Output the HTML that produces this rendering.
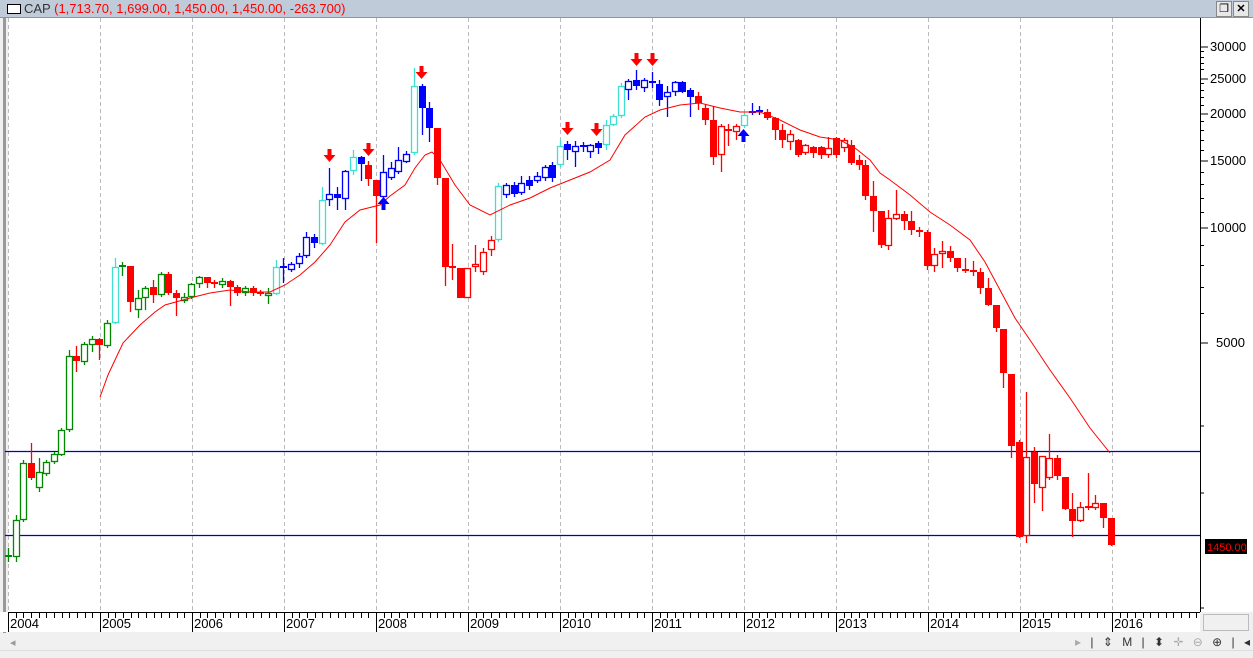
<!DOCTYPE html>
<html><head><meta charset="utf-8">
<style>
html,body{margin:0;padding:0;width:1253px;height:658px;overflow:hidden;background:#f0f0f0;font-family:"Liberation Sans",Arial,sans-serif;position:relative;}
#title{position:absolute;left:0;top:0;width:1253px;height:18px;background:#bfcbd8;border-bottom:1px solid #8a96a2;box-sizing:border-box;}
#title .t{position:absolute;left:24px;top:1px;font-size:13px;color:#333;}
#title .t span{color:#f00;}
#title .box{position:absolute;left:7px;top:4px;width:12px;height:8px;border:1px solid #000;background:#fff;}
.btn{position:absolute;top:1px;width:14px;height:14px;border:1px solid #888;background:#e8e8e8;font-size:11px;line-height:14px;text-align:center;}
#chart{position:absolute;left:0;top:18px;}
.pl{position:absolute;left:1210px;font-size:13px;color:#000;}
.yr{position:absolute;top:616px;font-size:13px;color:#000;}
#tb{position:absolute;left:1075px;top:635px;width:175px;height:15px;overflow:hidden;font-size:12px;color:#333;white-space:nowrap;letter-spacing:3px;}
</style></head><body>
<div id="title"><div class="box"></div><div class="t">CAP <span>(1,713.70, 1,699.00, 1,450.00, 1,450.00, -263.700)</span></div>
<div class="btn" style="left:1216px">&#x2750;</div><div class="btn" style="left:1233px;font-weight:bold">✕</div></div>
<svg id="chart" width="1253" height="640" viewBox="0 18 1253 640" xmlns="http://www.w3.org/2000/svg">
<rect x="8" y="18" width="1245" height="594" fill="#fff"/>
<rect x="3" y="18" width="3" height="615" fill="#999"/>
<g stroke="#bbb" stroke-dasharray="4,3" stroke-width="1">
<line x1="8.5" y1="18" x2="8.5" y2="612"/><line x1="100.5" y1="18" x2="100.5" y2="612"/><line x1="192.5" y1="18" x2="192.5" y2="612"/><line x1="284.5" y1="18" x2="284.5" y2="612"/><line x1="376.5" y1="18" x2="376.5" y2="612"/><line x1="468.5" y1="18" x2="468.5" y2="612"/><line x1="560.5" y1="18" x2="560.5" y2="612"/><line x1="652.5" y1="18" x2="652.5" y2="612"/><line x1="744.5" y1="18" x2="744.5" y2="612"/><line x1="836.5" y1="18" x2="836.5" y2="612"/><line x1="928.5" y1="18" x2="928.5" y2="612"/><line x1="1020.5" y1="18" x2="1020.5" y2="612"/><line x1="1112.5" y1="18" x2="1112.5" y2="612"/>
</g>
<line x1="5" y1="451.5" x2="1200" y2="451.5" stroke="#00c" stroke-width="1.3"/>
<line x1="5" y1="535.5" x2="1200" y2="535.5" stroke="#00c" stroke-width="1.3"/>
<g id="candles"></g>
<polyline fill="none" stroke="#f00" stroke-width="1" points="100,397 108,375 115,360 123,343 140,325 155,312 165,305 190,298 210,293 230,290 250,292 270,292 285,285 300,275 315,262 330,245 345,222 360,210 380,205 390,196 405,185 415,168 425,155 432,152 440,160 455,185 470,205 490,215 510,205 530,198 550,188 570,180 590,172 610,160 625,135 645,117 660,110 680,105 700,103 720,108 740,112 760,112 780,120 800,130 820,137 840,140 855,148 870,160 880,173 890,180 910,195 930,212 950,225 970,240 985,262 1000,290 1015,318 1030,340 1050,370 1070,398 1090,428 1110,453"/>
<g id="arrows"></g>
<line x1="1200.5" y1="18" x2="1200.5" y2="612" stroke="#000"/>
<g stroke="#000" id="yt">
<line x1="1200" y1="47" x2="1208" y2="47"/><line x1="1200" y1="79" x2="1208" y2="79"/><line x1="1200" y1="114" x2="1208" y2="114"/><line x1="1200" y1="161" x2="1208" y2="161"/><line x1="1200" y1="228" x2="1208" y2="228"/><line x1="1200" y1="343" x2="1208" y2="343"/><line x1="1200" y1="426" x2="1204" y2="426"/><line x1="1200" y1="493" x2="1204" y2="493"/><line x1="1200" y1="608" x2="1204" y2="608"/>
</g>
<rect x="0" y="612" width="1200" height="20" fill="#fff"/>
<line x1="8" y1="612.5" x2="1200" y2="612.5" stroke="#000"/>
<g id="ticks" stroke="#000"></g>
<rect x="1205" y="539" width="42" height="15" fill="#000"/>
<text x="1207" y="551" font-family="Liberation Sans" font-size="11" fill="#f00">1450.00</text>
<rect x="1201" y="612" width="52" height="21" fill="#f0f0f0"/>
<rect x="1203.5" y="614.5" width="45" height="16" fill="#f0f0f0" stroke="#bbb"/>
<rect x="0" y="633" width="1253" height="17" fill="#f0f0f0"/>
<rect x="0" y="650" width="1253" height="8" fill="#f0f0f0"/>
<line x1="0" y1="650.5" x2="1253" y2="650.5" stroke="#ddd"/>
</svg>
<div class="pl" style="top:39px">30000</div><div class="pl" style="top:71px">25000</div><div class="pl" style="top:106px">20000</div><div class="pl" style="top:153px">15000</div><div class="pl" style="top:220px">10000</div><div class="pl" style="top:335px;left:1216px">5000</div>
<div class="yr" style="left:10px">2004</div><div class="yr" style="left:102px">2005</div><div class="yr" style="left:194px">2006</div><div class="yr" style="left:286px">2007</div><div class="yr" style="left:378px">2008</div><div class="yr" style="left:470px">2009</div><div class="yr" style="left:562px">2010</div><div class="yr" style="left:654px">2011</div><div class="yr" style="left:746px">2012</div><div class="yr" style="left:838px">2013</div><div class="yr" style="left:930px">2014</div><div class="yr" style="left:1022px">2015</div><div class="yr" style="left:1114px">2016</div>
<div style="position:absolute;left:10px;top:636px;font-size:11px;color:#999">◂</div>
<div id="tb"><span style="color:#aaa">▸</span> | ⇕ M | ⬍ <span style="color:#aaa">✛ ⊖</span> ⊕ | ◀ ▶</div>
<script>
var C={g:'#008800',r:'#ff0000',b:'#0000ff',c:'#40e0d0'};
var d=[
[8,555,557,'g',0,548,562],[16,520,557,'g',0,515,562],[23,463,520,'g',0,460,522],[31,463,478,'r',1,443,480],[39,472,488,'g',0,458,492],[46,462,474,'g',0,460,476],[54,454,462,'g',0,452,464],[61,430,455,'g',0,428,456],[69,356,430,'g',0,350,432],[76,356,361,'r',1,346,372],[84,344,362,'g',0,342,365],[92,339,345,'g',0,336,352],[99,339,345,'r',1,338,360],[107,323,346,'g',0,320,348],[115,267,323,'c',0,258,324],[122,265,267,'g',1,262,276],[130,266,302,'r',1,266,312],[138,298,310,'g',0,290,318],[145,288,298,'g',0,286,310],[153,287,295,'r',1,280,303],[161,274,295,'g',0,272,297],[168,274,293,'r',1,272,295],[176,293,298,'r',1,290,316],[184,297,301,'g',0,293,303],[191,284,297,'g',0,283,299],[199,277,284,'g',0,276,288],[207,277,283,'r',1,277,288],[214,282,284,'r',1,280,288],[222,281,285,'g',0,278,288],[230,281,287,'r',1,280,306],[237,287,293,'r',1,285,296],[245,288,293,'g',0,286,296],[253,288,293,'r',1,286,296],[260,292,294,'r',1,290,296],[268,293,296,'g',0,288,304],[276,267,294,'c',0,260,295],[283,266,268,'b',1,258,283],[291,264,270,'b',0,262,272],[299,256,264,'b',0,253,268],[306,237,256,'b',0,232,258],[314,237,243,'b',1,234,248],[322,200,244,'c',0,187,245],[329,194,200,'b',0,168,206],[337,194,198,'b',1,187,210],[345,171,199,'b',0,170,210],[353,157,171,'c',0,150,175],[361,157,164,'b',1,156,181],[368,165,179,'r',1,161,186],[376,180,196,'r',1,180,243],[383,172,197,'b',0,155,200],[391,168,178,'b',0,162,180],[398,160,172,'b',0,147,174],[406,154,162,'b',0,151,163],[414,86,153,'c',0,68,155],[422,86,108,'b',1,84,135],[429,108,128,'b',1,102,142],[437,128,178,'r',1,128,185],[445,178,267,'r',1,178,286],[452,266,268,'r',1,244,280],[460,268,298,'r',1,268,298],[467,268,298,'r',0,268,298],[475,264,267,'r',0,245,272],[483,252,272,'r',0,248,275],[491,240,250,'r',0,236,256],[498,186,240,'c',0,183,242],[506,185,195,'b',0,183,198],[514,185,194,'b',1,182,197],[521,183,193,'b',0,176,195],[529,180,186,'b',1,176,190],[537,176,181,'b',0,172,183],[545,167,178,'b',0,165,181],[552,165,178,'b',1,162,182],[560,146,165,'c',0,140,167],[567,144,150,'b',1,141,160],[575,146,152,'b',0,141,167],[583,145,147,'b',1,142,152],[590,145,152,'b',0,144,158],[598,143,148,'b',1,141,154],[606,125,145,'c',0,120,150],[613,116,125,'c',0,114,126],[621,86,116,'c',0,83,118],[628,81,90,'b',0,79,100],[636,80,86,'b',1,70,90],[644,80,88,'b',0,78,92],[652,81,83,'b',1,72,88],[659,84,100,'b',1,80,106],[667,92,97,'b',0,86,117],[675,82,92,'b',0,81,96],[682,82,92,'b',1,81,93],[690,90,97,'b',1,88,117],[698,96,103,'r',1,92,110],[705,108,120,'r',1,104,125],[713,120,157,'r',1,106,165],[721,126,155,'r',0,124,172],[728,129,131,'r',1,124,146],[736,126,132,'r',0,124,140],[744,115,126,'c',0,113,128],[752,111,113,'b',1,103,115],[759,110,112,'b',1,106,115],[767,112,118,'r',1,109,120],[775,118,130,'r',1,117,140],[782,130,140,'r',1,124,148],[790,134,142,'r',0,130,150],[798,140,155,'r',1,139,157],[805,145,153,'r',0,144,155],[813,147,153,'r',1,146,158],[821,147,155,'r',1,146,159],[828,148,155,'r',0,137,158],[836,138,155,'r',1,137,158],[844,140,148,'r',0,138,152],[851,145,163,'r',1,140,165],[859,160,165,'r',1,155,170],[865,165,196,'r',1,160,200],[873,196,211,'r',1,181,232],[881,211,245,'r',1,211,248],[888,218,246,'r',0,210,250],[896,214,219,'r',0,190,220],[904,214,221,'r',1,211,230],[911,221,230,'r',1,211,235],[919,230,232,'r',1,227,237],[927,232,266,'r',1,230,270],[934,254,266,'r',0,248,272],[942,251,254,'r',0,241,268],[950,251,258,'r',1,246,262],[957,258,268,'r',1,258,272],[965,269,271,'r',1,258,273],[973,270,272,'r',1,261,276],[980,272,288,'r',1,268,294],[988,288,305,'r',1,278,306],[996,305,328,'r',1,305,332],[1003,329,373,'r',1,329,388],[1011,374,446,'r',1,374,458],[1019,442,537,'r',1,440,538],[1026,457,536,'r',0,392,543],[1034,452,484,'r',1,447,503],[1042,456,488,'r',0,456,511],[1049,458,478,'r',0,434,480],[1057,458,476,'r',1,455,480],[1065,477,509,'r',1,477,510],[1072,509,521,'r',1,493,537],[1080,507,521,'r',0,502,522],[1088,506,508,'r',1,473,510],[1095,503,508,'r',0,495,510],[1103,503,518,'r',1,503,528],[1111,518,545,'r',1,518,546]
];
var s='';
d.forEach(function(c){var col=C[c[3]];var x=c[0];
s+='<line x1="'+(x+0.5)+'" y1="'+c[5]+'" x2="'+(x+0.5)+'" y2="'+c[6]+'" stroke="'+col+'" stroke-width="1.3"/>';
var h=Math.max(c[2]-c[1],1);
if(h<=2){s+='<rect x="'+(x-3)+'" y="'+c[1]+'" width="7" height="2" fill="'+col+'"/>';}
else if(c[4]){s+='<rect x="'+(x-3)+'" y="'+c[1]+'" width="7" height="'+h+'" fill="'+col+'"/>';}
else{s+='<rect x="'+(x-2.5)+'" y="'+(c[1]+0.5)+'" width="6" height="'+(h-1)+'" fill="#fff" stroke="'+col+'" stroke-width="1.3"/>';}
});
document.getElementById('candles').innerHTML=s;
var a='';
[[329,160],[368,154],[421,77],[567,133],[596,134],[636,64],[652,64]].forEach(function(p){var x=p[0]+0.5,y=p[1];
a+='<path d="M'+(x-2)+' '+(y-11)+'h4v6h4l-6 7l-6-7h4z" fill="#f00"/>';});
[[383,198],[743,130]].forEach(function(p){var x=p[0]+0.5,y=p[1];
a+='<path d="M'+(x-2)+' '+(y+12)+'h4v-6h4l-6-7l-6 7h4z" fill="#00f"/>';});
document.getElementById('arrows').innerHTML=a;
var t='';
for(var i=0;i<156;i++){var x=Math.round(8+i*92/12);var yr=(i%12==0);t+='<line x1="'+(x+0.5)+'" y1="613" x2="'+(x+0.5)+'" y2="'+(yr?632:618)+'"/>';}
document.getElementById('ticks').innerHTML=t;
var yt='';
[[30000,25000,1000],[25000,20000,1000],[20000,15000,1000],[15000,10000,1000],[10000,5000,1000]].forEach(function(r){
for(var p=r[1]+r[2];p<r[0];p+=r[2]){var y=Math.round(228-166*Math.log(p/10000))+0.5;yt+='<line x1="1200" y1="'+y+'" x2="1204" y2="'+y+'"/>';}});
document.getElementById('yt').innerHTML+=yt;
</script>
</body></html>
